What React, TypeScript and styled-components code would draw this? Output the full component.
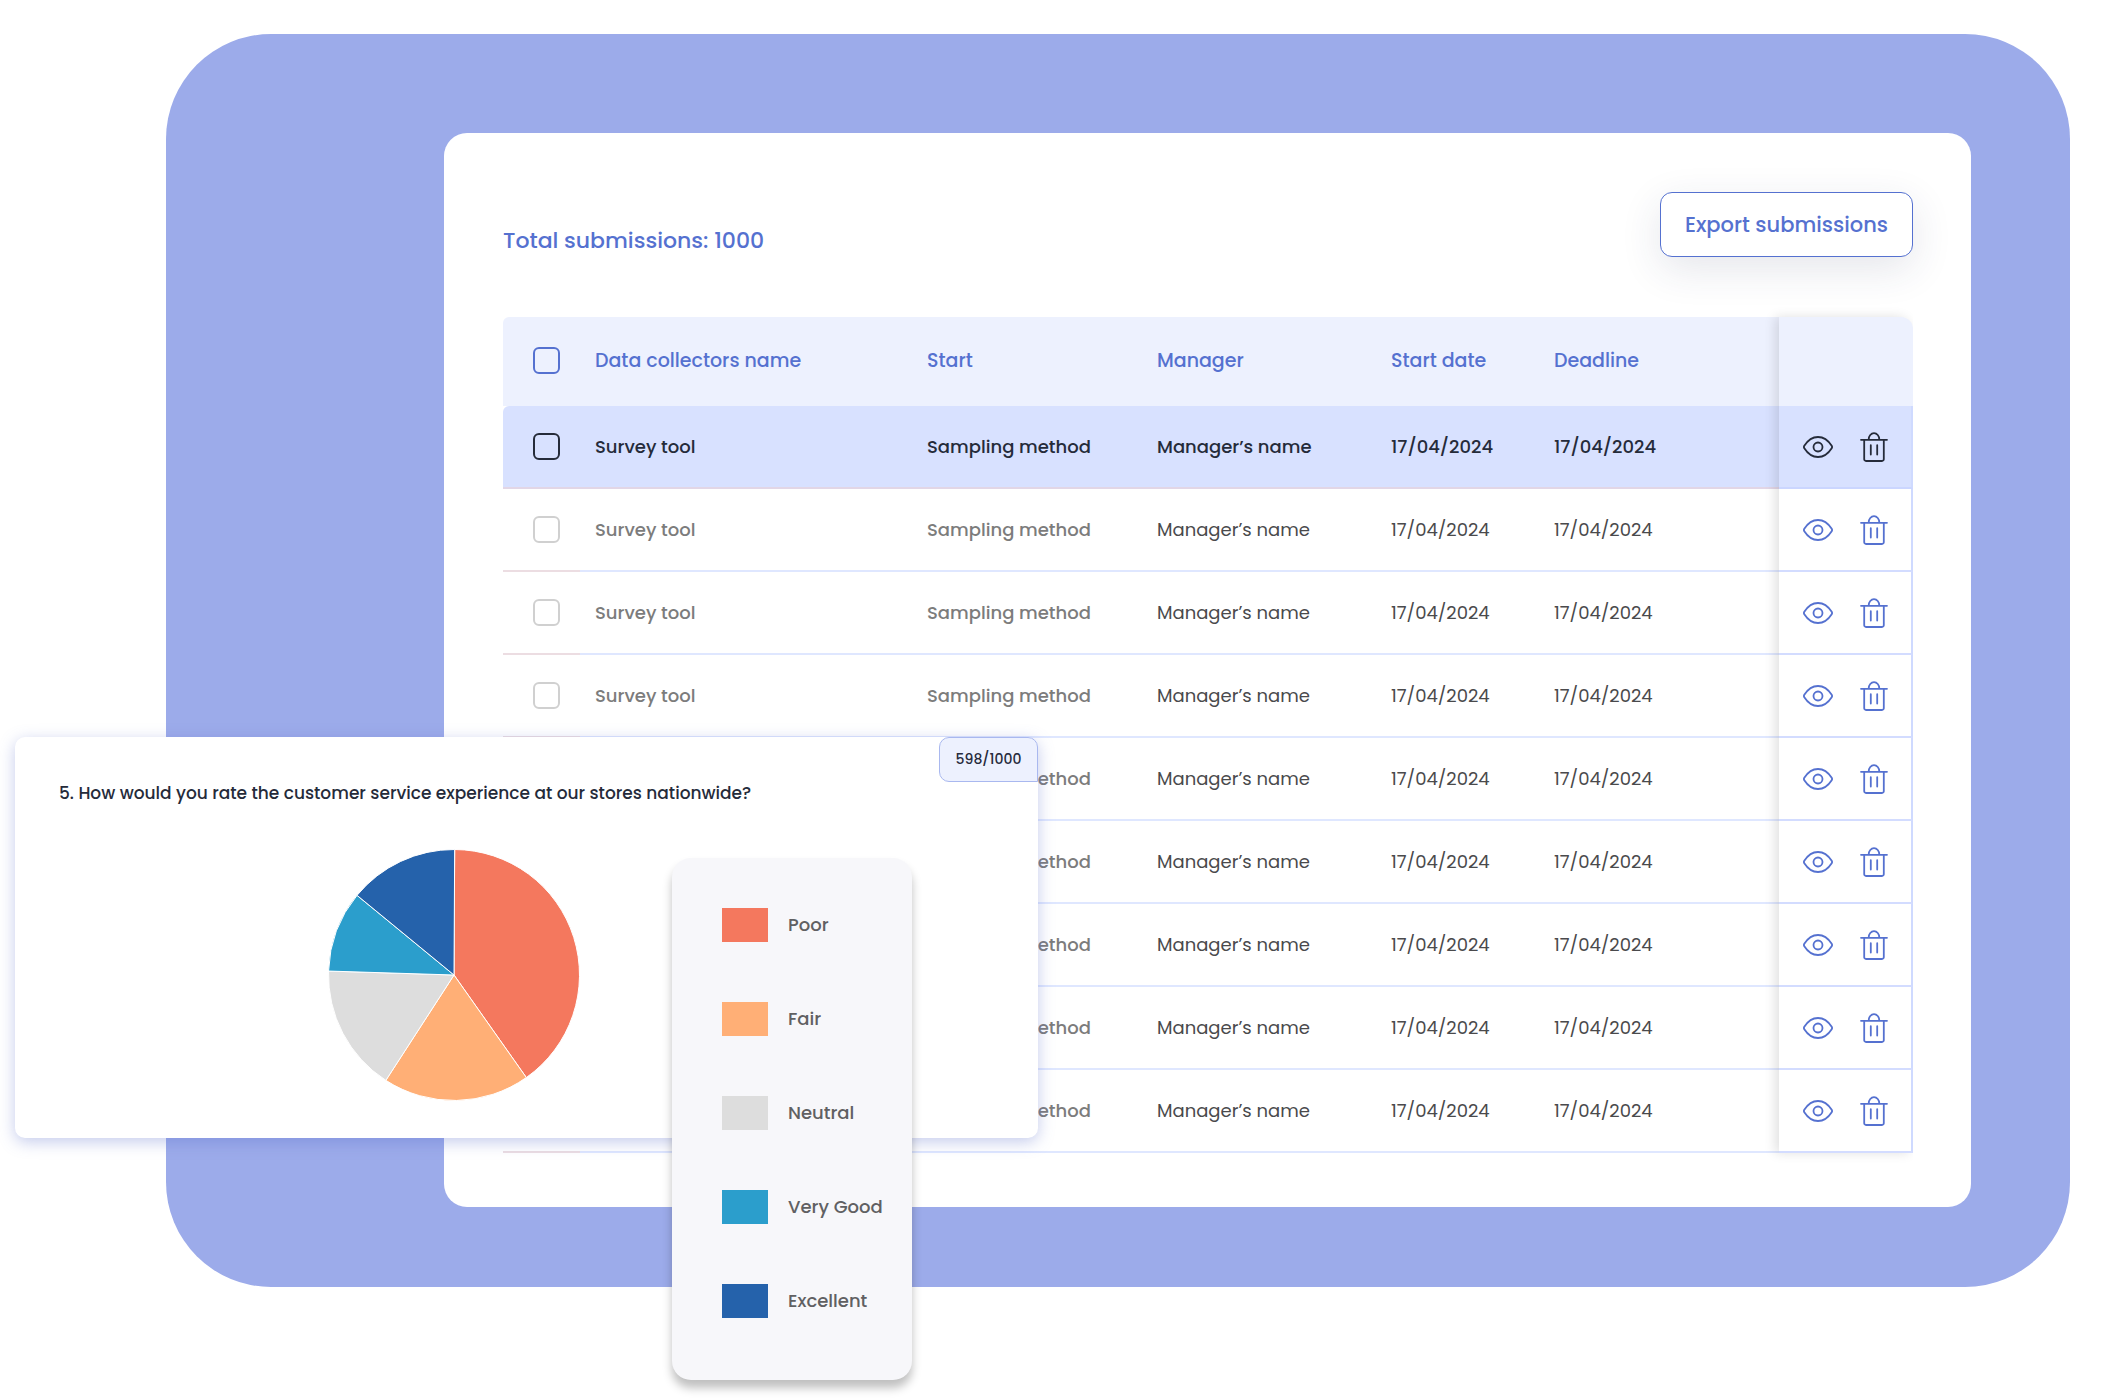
import React from "react";
import styled, { createGlobalStyle, css } from "styled-components";

const GlobalStyle = createGlobalStyle`
  *, *::before, *::after { box-sizing: border-box; }
  body {
    margin: 0;
    background: #fff;
    font-family: Poppins, Inter, "Open Sans", sans-serif;
    color: #262b3c;
  }
`;

const blue = "#5571d0";
const ink = "#252b3a";

const Page = styled.main`
  position: relative;
  min-height: 100vh;
  padding: 34px 45px 113px 166px;
`;

const Backdrop = styled.div`
  padding: 99px 99px 80px 278px;
  border-radius: 105px;
  background: #9cabea;
`;

const Panel = styled.section`
  padding: 59px 58px 54px 59px;
  border-radius: 23px;
  background: #fff;
`;

const Toolbar = styled.header`
  display: flex;
  align-items: flex-end;
  justify-content: space-between;
  margin-bottom: 60px;
`;

const Total = styled.h1`
  margin: 0;
  font-size: 22px;
  line-height: 32px;
  font-weight: 500;
  color: ${blue};
`;

const ExportButton = styled.button`
  height: 65px;
  padding: 0 24px;
  border: 1px solid ${blue};
  border-radius: 12px;
  background: #fff;
  color: ${blue};
  font: inherit;
  font-size: 21px;
  font-weight: 500;
  box-shadow: 0 12px 40px rgba(40, 50, 90, 0.12);
  cursor: pointer;
`;

const TableWrap = styled.div`
  position: relative;
`;

const PinnedShadow = styled.div`
  position: absolute;
  inset: 0 0 0 auto;
  width: 134px;
  border-top-right-radius: 12px;
  box-shadow: -4px 0 12px rgba(0, 0, 0, 0.12);
  clip-path: inset(-16px 0 -16px -24px);
  pointer-events: none;
`;

const Table = styled.table`
  width: 100%;
  table-layout: fixed;
  border-collapse: separate;
  border-spacing: 0;
  font-size: 18px;
  line-height: 28px;
`;

const Col = styled.col<{ $width?: number }>`
  width: ${(p) => (p.$width ? `${p.$width}px` : "auto")};
`;

const HeadCell = styled.th`
  height: 89px;
  padding: 0 0 2px 15px;
  background: #edf1fe;
  color: ${blue};
  font-size: 19px;
  font-weight: 500;
  text-align: left;
  white-space: nowrap;

  &:first-child {
    padding-left: 30px;
    border-top-left-radius: 6px;
  }
  &:last-child {
    border-top-right-radius: 12px;
  }
`;

const Cell = styled.td<{ $tone?: "muted" }>`
  height: 83px;
  padding: 0 0 0 15px;
  border-bottom: 2px solid #dfe7ff;
  color: ${(p) => (p.$tone === "muted" ? "#7c7c7c" : "#4a4a4c")};
  font-weight: ${(p) => (p.$tone === "muted" ? 500 : 400)};
  white-space: nowrap;
`;

const CheckCell = styled(Cell)`
  padding-left: 30px;
  border-bottom-color: #ecdde2;
`;

const ActionCell = styled(Cell)`
  padding: 0 23px 0 24px;
  border-right: 2px solid #cfdaff;
  border-bottom-color: #d3dcff;
`;

const Row = styled.tr<{ $active: boolean }>`
  ${(p) =>
    p.$active &&
    css`
      ${Cell} {
        background: #d8e1ff;
        color: ${ink};
        font-weight: 500;
        border-bottom-color: #e2d6e6;
      }
      ${ActionCell} {
        border-bottom-color: #cbd6ff;
      }
      ${CheckCell} {
        border-top-left-radius: 6px;
      }
    `}
`;

const Check = styled.input<{ $color: string }>`
  display: block;
  appearance: none;
  width: 27px;
  height: 27px;
  margin: 0;
  border: 2px solid ${(p) => p.$color};
  border-radius: 6px;
  cursor: pointer;

  &:checked {
    background: ${(p) => p.$color};
  }
`;

const Actions = styled.div`
  display: flex;
  align-items: center;
  justify-content: space-between;
`;

const IconButton = styled.button<{ $active: boolean }>`
  display: flex;
  padding: 0;
  border: 0;
  background: none;
  color: ${(p) => (p.$active ? ink : blue)};
  cursor: pointer;
`;

const SurveyCard = styled.section`
  position: absolute;
  top: 737px;
  left: 15px;
  width: 1023px;
  padding: 43px 44px 37px;
  border-radius: 10px;
  background: #fff;
  box-shadow: 0 4px 16px rgba(85, 105, 200, 0.35);
`;

const Question = styled.h2`
  margin: 0 0 42px;
  font-size: 17px;
  line-height: 27px;
  font-weight: 500;
  color: ${ink};
`;

const Chart = styled.div`
  display: flex;
  justify-content: center;
  padding-right: 146px;
`;

const Badge = styled.span`
  position: absolute;
  top: 0;
  right: 0;
  width: 99px;
  border: 1px solid #a9b8ef;
  border-radius: 10px 10px 0 10px;
  background: #edf1fe;
  font-size: 14px;
  line-height: 43px;
  font-weight: 500;
  text-align: center;
`;

const Legend = styled.ul`
  position: absolute;
  top: 121px;
  left: 657px;
  display: flex;
  flex-direction: column;
  gap: 60px;
  width: 240px;
  margin: 0;
  padding: 50px 0 62px 50px;
  border-radius: 19px;
  background: #f7f7fa;
  box-shadow: 0 8px 10px rgba(0, 0, 0, 0.25);
  list-style: none;
`;

const LegendItem = styled.li`
  display: flex;
  align-items: center;
  gap: 20px;
  font-size: 18px;
  line-height: 34px;
  font-weight: 500;
  color: #606062;
  white-space: nowrap;
`;

const Swatch = styled.span<{ $color: string }>`
  width: 46px;
  height: 34px;
  background: ${(p) => p.$color};
`;

const EyeIcon = () => (
  <svg width="30" height="22" viewBox="0 0 30 22" fill="none" stroke="currentColor" strokeWidth="1.8" aria-hidden="true">
    <path d="M1.3 9.8C4 5.6 8.6 1 15 1s11 4.6 13.7 8.8a2.2 2.2 0 0 1 0 2.4C26 16.4 21.4 21 15 21S4 16.4 1.3 12.2a2.2 2.2 0 0 1 0-2.4z" />
    <circle cx="15" cy="11" r="4.5" />
  </svg>
);

const TrashIcon = () => (
  <svg width="28" height="30" viewBox="0 0 28 30" fill="none" stroke="currentColor" strokeWidth="1.8" strokeLinecap="round" aria-hidden="true">
    <path d="M1 7.8h26M4.2 7.8v19.4a1.8 1.8 0 0 0 1.8 1.8h16a1.8 1.8 0 0 0 1.8-1.8V7.8M8.7 7.4a5.3 6.2 0 0 1 10.6 0M10.8 13.2v9.4M17.2 13.2v9.4" />
  </svg>
);

const ratings = [
  { label: "Poor", share: 144.5, color: "#f4785e" },
  { label: "Fair", share: 68.1, color: "#ffaf76" },
  { label: "Neutral", share: 58.9, color: "#dddddd" },
  { label: "Very Good", share: 37.6, color: "#2b9ecc" },
  { label: "Excellent", share: 50.9, color: "#2562ab" },
];

const R = 125.5;
const point = (deg: number) => {
  const a = (deg * Math.PI) / 180;
  return `${(126 + R * Math.sin(a)).toFixed(2)} ${(126 - R * Math.cos(a)).toFixed(2)}`;
};

const PieChart = () => {
  let start = 0.3;
  return (
    <svg width="252" height="252" viewBox="0 0 252 252" role="img" aria-label="Ratings breakdown">
      {ratings.map(({ label, share, color }) => {
        const from = start;
        start += share;
        return (
          <path
            key={label}
            d={`M126 126L${point(from)}A${R} ${R} 0 0 1 ${point(start)}Z`}
            fill={color}
            stroke="#fff"
            strokeWidth="1"
          />
        );
      })}
    </svg>
  );
};

const rows = Array.from({ length: 9 }, (_, i) => ({
  id: i,
  tool: "Survey tool",
  method: "Sampling method",
  manager: "Manager’s name",
  start: "17/04/2024",
  deadline: "17/04/2024",
}));

export default function App() {
  return (
    <Page>
      <GlobalStyle />
      <Backdrop>
        <Panel>
          <Toolbar>
            <Total>Total submissions: 1000</Total>
            <ExportButton type="button">Export submissions</ExportButton>
          </Toolbar>
          <TableWrap>
            <Table>
              <colgroup>
                <Col $width={77} />
                <Col $width={332} />
                <Col $width={230} />
                <Col $width={234} />
                <Col $width={163} />
                <Col />
                <Col $width={134} />
              </colgroup>
              <thead>
                <tr>
                  <HeadCell>
                    <Check type="checkbox" aria-label="Select all" $color={blue} />
                  </HeadCell>
                  <HeadCell>Data collectors name</HeadCell>
                  <HeadCell>Start</HeadCell>
                  <HeadCell>Manager</HeadCell>
                  <HeadCell>Start date</HeadCell>
                  <HeadCell>Deadline</HeadCell>
                  <HeadCell aria-label="Actions" />
                </tr>
              </thead>
              <tbody>
                {rows.map((row) => {
                  const active = row.id === 0;
                  return (
                    <Row key={row.id} $active={active}>
                      <CheckCell>
                        <Check type="checkbox" aria-label="Select row" $color={active ? ink : "#d0d0d0"} />
                      </CheckCell>
                      <Cell $tone="muted">{row.tool}</Cell>
                      <Cell $tone="muted">{row.method}</Cell>
                      <Cell>{row.manager}</Cell>
                      <Cell>{row.start}</Cell>
                      <Cell>{row.deadline}</Cell>
                      <ActionCell>
                        <Actions>
                          <IconButton type="button" aria-label="View" $active={active}>
                            <EyeIcon />
                          </IconButton>
                          <IconButton type="button" aria-label="Delete" $active={active}>
                            <TrashIcon />
                          </IconButton>
                        </Actions>
                      </ActionCell>
                    </Row>
                  );
                })}
              </tbody>
            </Table>
            <PinnedShadow />
          </TableWrap>
        </Panel>
      </Backdrop>
      <SurveyCard>
        <Question>5. How would you rate the customer service experience at our stores nationwide?</Question>
        <Badge>598/1000</Badge>
        <Chart>
          <PieChart />
        </Chart>
        <Legend>
          {ratings.map(({ label, color }) => (
            <LegendItem key={label}>
              <Swatch $color={color} />
              {label}
            </LegendItem>
          ))}
        </Legend>
      </SurveyCard>
    </Page>
  );
}
